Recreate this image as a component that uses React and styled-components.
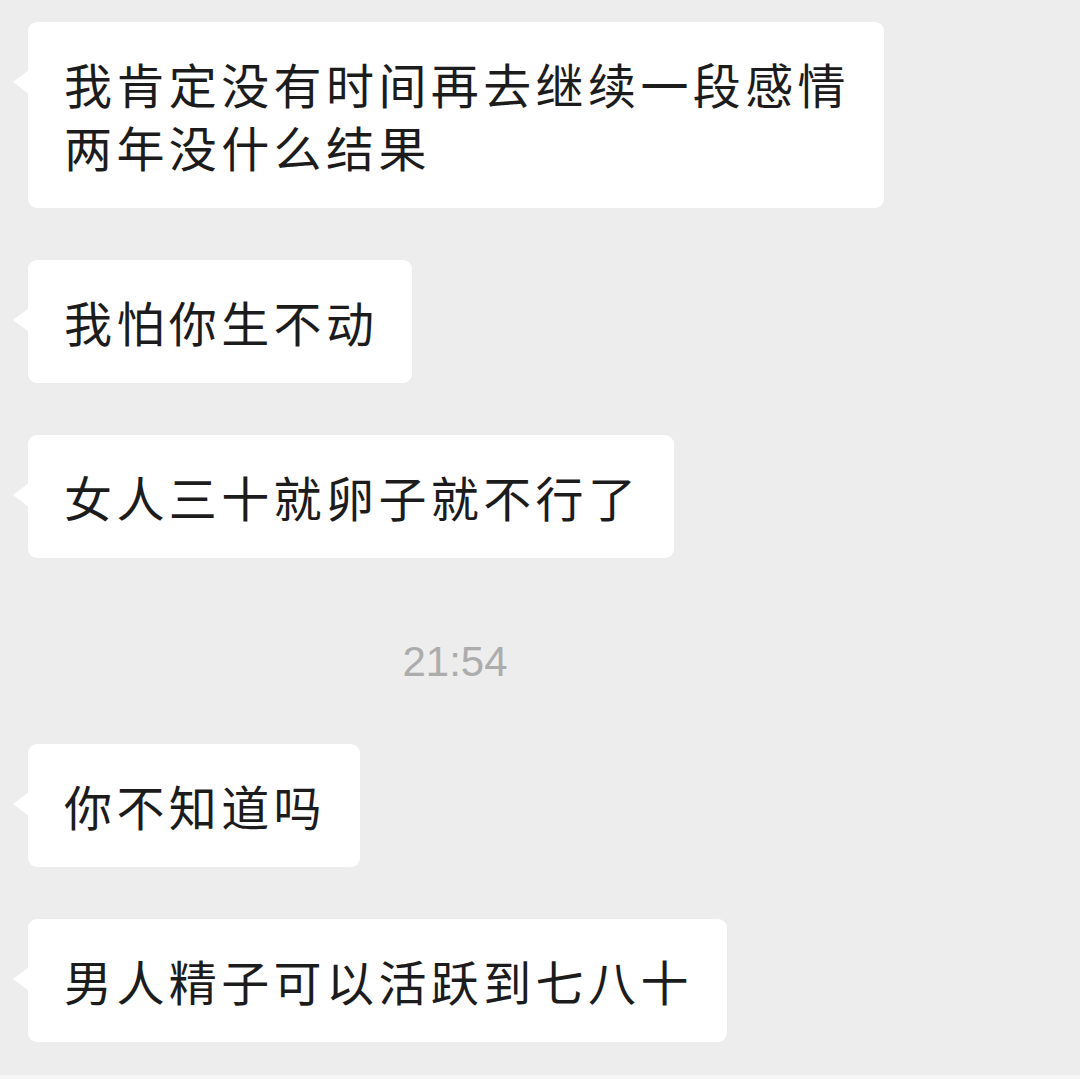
import React from 'react';
import styled, { createGlobalStyle } from 'styled-components';

const GlobalStyle = createGlobalStyle`
  html, body {
    margin: 0;
    padding: 0;
    background: #f6f6f6;
  }
  * {
    box-sizing: border-box;
  }
`;

const StyledChat = styled.div`
  width: 1080px;
  height: 1075px;
  overflow: hidden;
  background: #ededed;
  display: flex;
  flex-direction: column;
  align-items: flex-start;
  gap: 52px;
  padding: 22px 0 0 28px;
  font-family: 'Noto Sans CJK SC', 'Noto Sans', sans-serif;
`;

const StyledBubble = styled.div`
  position: relative;
  max-width: 870px;
  background: #ffffff;
  border-radius: 9px;
  padding: 30px 34px 30px 36px;
  color: #1c1c1c;
  font-size: 48px;
  line-height: 63px;
  letter-spacing: 4.4px;
  white-space: pre-line;

  &::before {
    content: '';
    position: absolute;
    left: -15px;
    top: 48px;
    border-top: 12px solid transparent;
    border-bottom: 12px solid transparent;
    border-right: 16px solid #ffffff;
  }
`;

const StyledTime = styled.div`
  align-self: stretch;
  margin: 27px 0 5px -28px;
  padding-right: 170px;
  text-align: center;
  color: #acacac;
  font-family: 'Liberation Sans', Arial, sans-serif;
  font-size: 42px;
  line-height: 50px;
`;

const messages = [
  { id: 1, text: '我肯定没有时间再去继续一段感情\n两年没什么结果' },
  { id: 2, text: '我怕你生不动' },
  { id: 3, text: '女人三十就卵子就不行了' },
  { id: 4, time: '21:54' },
  { id: 5, text: '你不知道吗' },
  { id: 6, text: '男人精子可以活跃到七八十' },
];

const App = () => (
  <>
    <GlobalStyle />
    <StyledChat>
      {messages.map(({ id, text, time }) =>
        time ? <StyledTime key={id}>{time}</StyledTime> : <StyledBubble key={id}>{text}</StyledBubble>,
      )}
    </StyledChat>
  </>
);

export default App;
